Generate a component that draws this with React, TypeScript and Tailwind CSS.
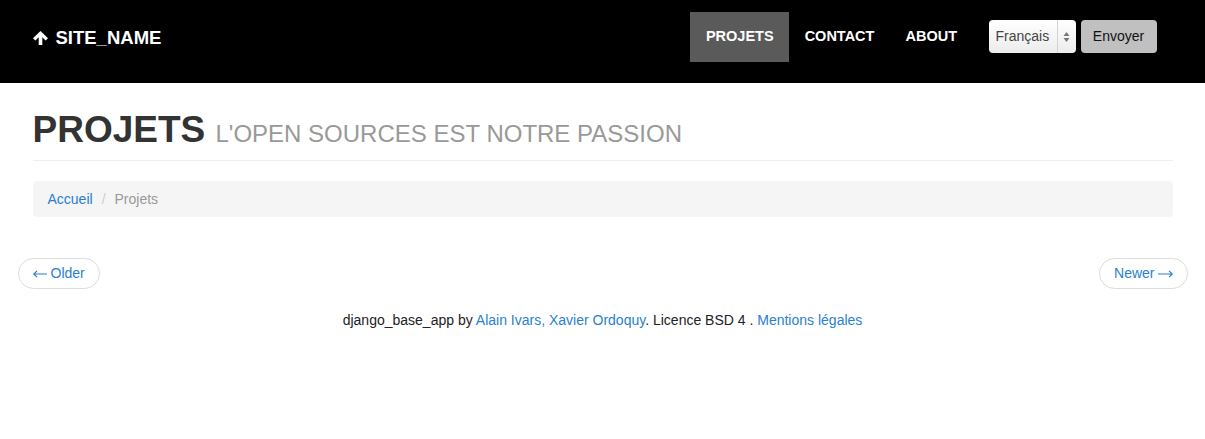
import React from "react";

const font = { fontFamily: '"Liberation Sans", Arial, Helvetica, sans-serif' };

function UpArrow() {
  return (
    <svg width="15" height="14" viewBox="0 0 15 14" className="mr-[8px]">
      <path d="M7.5 0 L15 7.2 L12.6 9.4 L9.3 6.2 L9.3 14 L5.7 14 L5.7 6.2 L2.4 9.4 L0 7.2 Z" fill="#fff" />
    </svg>
  );
}

function LeftArrow() {
  return (
    <svg width="14" height="8" viewBox="0 0 14 8" className="mr-[4px]">
      <path d="M14 4 L1 4 M4 0.8 L0.8 4 L4 7.2" stroke="#2a7fd0" strokeWidth="1.2" fill="none" />
    </svg>
  );
}

function RightArrow() {
  return (
    <svg width="15" height="8" viewBox="0 0 15 8" className="ml-[3px]">
      <path d="M0 4 L14 4 M11 0.8 L14.2 4 L11 7.2" stroke="#2a7fd0" strokeWidth="1.2" fill="none" />
    </svg>
  );
}

export default function App() {
  return (
    <div className="min-h-[439px] bg-white text-[14px] text-[#333]" style={font}>
      <nav className="h-[83px] bg-black">
        <div className="mx-auto flex h-full w-[1170px] items-start justify-between px-[15px]">
          <a className="mt-[28px] flex items-center text-[18.5px] font-bold leading-[20px] text-white">
            <UpArrow />
            SITE_NAME
          </a>
          <div className="flex items-start">
            <ul className="mt-[12px] flex">
              <li className="flex h-[50px] items-center bg-[#5a5a5a] px-[15.5px] text-[14.5px] font-bold text-white">PROJETS</li>
              <li className="flex h-[50px] items-center px-[15.5px] text-[14.5px] font-bold text-white">CONTACT</li>
              <li className="flex h-[50px] items-center px-[15.5px] text-[14.5px] font-bold text-white">ABOUT</li>
            </ul>
            <div className="ml-[16px] mr-[16px] mt-[20px] flex gap-[5px]">
              <div className="flex h-[33px] w-[87px] items-stretch rounded-[4px] bg-gradient-to-b from-white to-[#ececec] text-[14px] text-[#444]">
                <span className="flex flex-1 items-center pl-[7px]">Français</span>
                <span className="flex w-[19px] flex-col items-center justify-center border-l border-[#d4d4d4]">
                  <svg width="7" height="12" viewBox="0 0 7 12">
                    <path d="M3.5 1 L6.5 5 L0.5 5 Z M3.5 11 L0.5 7 L6.5 7 Z" fill="#777" />
                  </svg>
                </span>
              </div>
              <button className="h-[33px] w-[76px] rounded-[4px] bg-[#c0c0c0] text-[14px] text-[#111]">Envoyer</button>
            </div>
          </div>
        </div>
      </nav>

      <div className="mx-auto w-[1170px] px-[15px]">
        <div className="mt-[26px] border-b border-[#eee] pb-[5px]">
          <h1 className="text-[37px] font-bold leading-[42px] text-[#333]">
            PROJETS <small className="text-[24px] font-normal text-[#999]">L'OPEN SOURCES EST NOTRE PASSION</small>
          </h1>
        </div>
        <div className="mt-[20px] flex h-[36px] items-center rounded-[4px] bg-[#f5f5f5] px-[15px] text-[14px]">
          <a className="text-[#2a7fd0]">Accueil</a>
          <span className="px-[9px] text-[#ccc]">/</span>
          <span className="text-[#999]">Projets</span>
        </div>
      </div>

      <div className="mx-auto mt-[41px] flex w-[1170px] justify-between">
        <a className="flex h-[31px] items-center rounded-full border border-[#ddd] px-[14px] text-[14px] text-[#2a7fd0]">
          <LeftArrow />
          Older
        </a>
        <a className="flex h-[31px] items-center rounded-full border border-[#ddd] px-[14px] text-[14px] text-[#2a7fd0]">
          Newer
          <RightArrow />
        </a>
      </div>

      <footer className="mt-[21px] text-center text-[14px] leading-[20px] text-[#222]">
        django_base_app by <a className="text-[#2a7fd0]">Alain Ivars, Xavier Ordoquy</a>. Licence BSD 4 .{" "}
        <a className="text-[#2a7fd0]">Mentions légales</a>
      </footer>
    </div>
  );
}
